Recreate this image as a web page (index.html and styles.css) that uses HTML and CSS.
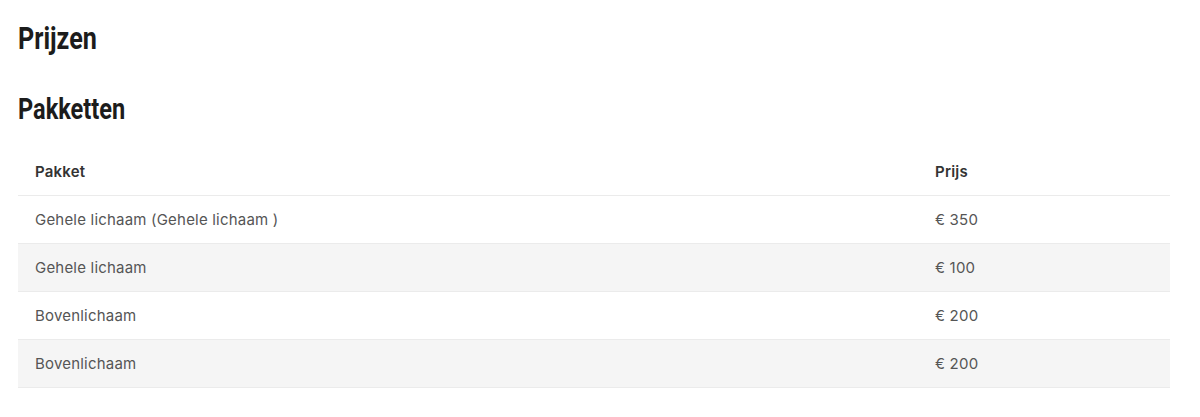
FILE: index.html
```html
<!DOCTYPE html>
<html lang="nl">
<head>
<meta charset="utf-8">
<title>Prijzen</title>
<link rel="stylesheet" href="styles.css">
</head>
<body>
<main class="page">
  <h1 class="title"><span class="narrow">Prijzen</span></h1>
  <h2 class="subtitle"><span class="narrow">Pakketten</span></h2>
  <table class="prices">
    <thead>
      <tr><th class="col-name">Pakket</th><th class="col-price">Prijs</th></tr>
    </thead>
    <tbody>
      <tr><td>Gehele lichaam (Gehele lichaam )</td><td>€ 350</td></tr>
      <tr><td>Gehele lichaam</td><td>€ 100</td></tr>
      <tr><td>Bovenlichaam</td><td>€ 200</td></tr>
      <tr><td>Bovenlichaam</td><td>€ 200</td></tr>
    </tbody>
  </table>
</main>
</body>
</html>
```

FILE: styles.css
```css
html, body { margin: 0; padding: 0; background: #fff; }
.page { padding: 0 30px 0 18px; }
.title, .subtitle {
  font-family: Roboto, "Liberation Sans", sans-serif;
  font-weight: bold;
  color: #1c1c1c;
  margin: 0;
}
.narrow {
  display: inline-block;
  transform: scaleX(0.785);
  transform-origin: left center;
}
.title { font-size: 32px; line-height: 38px; padding-top: 19px; }
.subtitle { font-size: 30px; line-height: 36px; margin-top: 34px; }
.prices {
  width: 100%;
  border-collapse: collapse;
  margin-top: 21px;
  font-family: Inter, "Noto Sans", sans-serif;
  font-size: 15px;
  letter-spacing: 0.2px;
  color: #555;
}
.prices th, .prices td {
  text-align: left;
  padding: 0 17px;
  height: 47px;
  border-bottom: 1px solid #ebebeb;
}
.prices th { font-weight: 600; color: #333; }
.prices .col-price { width: 218px; }
.prices tbody tr:nth-child(even) td { background: #f5f5f5; }
```
